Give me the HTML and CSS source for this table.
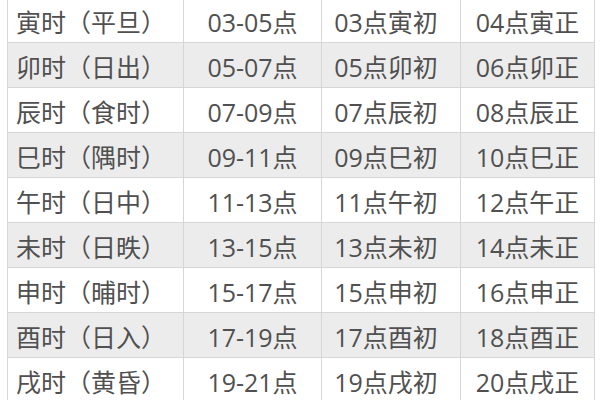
FILE: index.html
```html
<!DOCTYPE html>
<html lang="zh-CN">
<head>
<meta charset="utf-8">
<link rel="stylesheet" href="styles.css">
</head>
<body>
<div class="wrap">
<table class="tbl">
<colgroup><col class="k1"><col class="k2"><col class="k3"><col class="k4"></colgroup>
<tr><td class="c1">寅时（平旦）</td><td>03-05点</td><td class="c3">03点寅初</td><td>04点寅正</td></tr>
<tr><td class="c1">卯时（日出）</td><td>05-07点</td><td class="c3">05点卯初</td><td>06点卯正</td></tr>
<tr><td class="c1">辰时（食时）</td><td>07-09点</td><td class="c3">07点辰初</td><td>08点辰正</td></tr>
<tr><td class="c1">巳时（隅时）</td><td>09-11点</td><td class="c3">09点巳初</td><td>10点巳正</td></tr>
<tr><td class="c1">午时（日中）</td><td>11-13点</td><td class="c3">11点午初</td><td>12点午正</td></tr>
<tr><td class="c1">未时（日昳）</td><td>13-15点</td><td class="c3">13点未初</td><td>14点未正</td></tr>
<tr><td class="c1">申时（晡时）</td><td>15-17点</td><td class="c3">15点申初</td><td>16点申正</td></tr>
<tr><td class="c1">酉时（日入）</td><td>17-19点</td><td class="c3">17点酉初</td><td>18点酉正</td></tr>
<tr><td class="c1">戌时（黄昏）</td><td>19-21点</td><td class="c3">19点戌初</td><td>20点戌正</td></tr>
</table>
</div>
</body>
</html>
```
FILE: styles.css
```css
html, body {
  margin: 0;
  padding: 0;
  background: #ffffff;
  overflow: hidden;
}
.wrap {
  padding-left: 7px;
  margin-top: -3px;
}
.tbl {
  border-collapse: collapse;
  table-layout: fixed;
  width: 587px;
  font-family: "Open Sans", "Noto Sans CJK SC", sans-serif;
  font-size: 25px;
  color: #505050;
}
.k1 { width: 176px; }
.k2 { width: 138px; }
.k3 { width: 139px; }
.k4 { width: 134px; }
.tbl td {
  box-sizing: border-box;
  height: 45px;
  padding: 4px 0 0 0;
  border: 1px solid #d6d6d6;
  text-align: center;
  white-space: nowrap;
  line-height: 1;
}
.tbl tr:nth-child(even) td {
  background: #ececec;
}
.tbl td.c1 {
  text-align: left;
  padding-left: 8px;
}
.tbl td.c3 {
  padding-right: 10px;
}
```
